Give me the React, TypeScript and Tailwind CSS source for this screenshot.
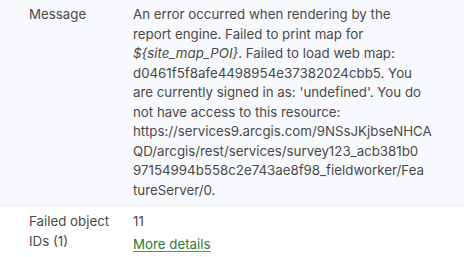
import React from 'react';

const messageLines: React.ReactNode[] = [
  'An error occurred when rendering by the',
  'report engine. Failed to print map for',
  <>
    <i>{'${site_map_POI}'}</i>. Failed to load web map:
  </>,
  'd0461f5f8afe4498954e37382024cbb5. You',
  "are currently signed in as: 'undefined'. You do",
  'not have access to this resource:',
  'https://services9.arcgis.com/9NSsJKjbseNHCA',
  'QD/arcgis/rest/services/survey123_acb381b0',
  '97154994b558c2e743ae8f98_fieldworker/Fea',
  'tureServer/0.',
];

const Row: React.FC<{ label: React.ReactNode; shaded?: boolean; children: React.ReactNode }> = ({
  label,
  shaded,
  children,
}) => (
  <div
    className={`flex border-b border-[#ebebeb] pt-[5px] pb-[5px] ${shaded ? 'bg-[#f8f9fd]' : 'bg-white'}`}
  >
    <div className="w-[133px] shrink-0 pl-[29px] pr-2">{label}</div>
    <div className="flex-1 pr-3">{children}</div>
  </div>
);

export default function App() {
  return (
    <div
      className="w-[464px] h-[257px] overflow-hidden bg-white text-[13.3px] leading-[19.5px] text-[#4a4a4a]"
      style={{ fontFamily: 'Inter, Lato, sans-serif' }}
    >
      <Row label="Message" shaded>
        {messageLines.map((line, i) => (
          <div key={i} className="whitespace-nowrap">
            {line}
          </div>
        ))}
      </Row>
      <div className="flex pt-[6px]">
        <div className="w-[133px] shrink-0 pl-[29px] pr-2">
          Failed object
          <br />
          IDs (1)
        </div>
        <div className="flex-1">
          <div>11</div>
          <a
            href="#"
            className="mt-[3px] inline-block text-[#2f7a38] underline decoration-[#35ac46] underline-offset-2"
          >
            More details
          </a>
        </div>
      </div>
    </div>
  );
}
